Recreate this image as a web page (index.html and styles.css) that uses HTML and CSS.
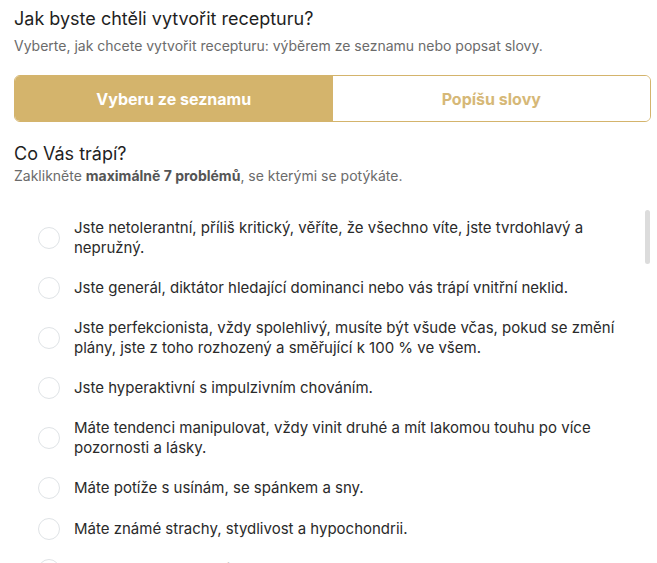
FILE: index.html
```html
<!DOCTYPE html>
<html lang="cs">
<head>
<meta charset="utf-8">
<title>Receptura</title>
<link rel="stylesheet" href="styles.css">
</head>
<body>
<main class="page">
  <section class="intro">
    <h1 class="title">Jak byste chtěli vytvořit recepturu?</h1>
    <p class="subtitle">Vyberte, jak chcete vytvořit recepturu: výběrem ze seznamu nebo popsat slovy.</p>
  </section>

  <div class="toggle">
    <button class="toggle-btn active" type="button">Vyberu ze seznamu</button>
    <button class="toggle-btn" type="button">Popíšu slovy</button>
  </div>

  <section class="problems">
    <h2 class="title">Co Vás trápí?</h2>
    <p class="subtitle">Zaklikněte <strong>maximálně 7 problémů</strong>, se kterými se potýkáte.</p>
  </section>

  <div class="list-wrap">
    <ul class="list">
      <li class="item"><span class="radio"></span><span class="label">Jste netolerantní, příliš kritický, věříte, že všechno víte, jste tvrdohlavý a nepružný.</span></li>
      <li class="item"><span class="radio"></span><span class="label">Jste generál, diktátor hledající dominanci nebo vás trápí vnitřní neklid.</span></li>
      <li class="item"><span class="radio"></span><span class="label">Jste perfekcionista, vždy spolehlivý, musíte být všude včas, pokud se změní plány, jste z toho rozhozený a směřující k 100 % ve všem.</span></li>
      <li class="item"><span class="radio"></span><span class="label">Jste hyperaktivní s impulzivním chováním.</span></li>
      <li class="item"><span class="radio"></span><span class="label">Máte tendenci manipulovat, vždy vinit druhé a mít lakomou touhu po více pozornosti a lásky.</span></li>
      <li class="item"><span class="radio"></span><span class="label">Máte potíže s usínám, se spánkem a sny.</span></li>
      <li class="item"><span class="radio"></span><span class="label">Máte známé strachy, stydlivost a hypochondrii.</span></li>
      <li class="item"><span class="radio"></span><span class="label">Máte sklony k depresím a smutku.</span></li>
    </ul>
    <div class="scroll-thumb"></div>
  </div>
</main>
</body>
</html>
```

FILE: styles.css
```css
* { box-sizing: border-box; }

html, body {
  margin: 0;
  padding: 0;
  height: 100%;
  overflow: hidden;
  background: #ffffff;
}

body {
  font-family: Inter, "Noto Sans", "Liberation Sans", sans-serif;
  color: #222222;
}

.page {
  padding: 7px 6px 0 14px;
}

.title {
  margin: 0;
  font-size: 18px;
  font-weight: 400;
  line-height: 24px;
  color: #1f1f1f;
}

.subtitle {
  margin: 0;
  font-size: 14px;
  line-height: 20px;
  color: #6b6b6b;
}

.intro .subtitle {
  margin-top: 5px;
}

.subtitle strong {
  font-weight: 700;
  color: #555555;
}

.toggle {
  display: flex;
  margin-top: 19px;
  height: 47px;
  border: 1px solid #d4b46c;
  border-radius: 6px;
  overflow: hidden;
}

.toggle-btn {
  flex: 1;
  border: 0;
  margin: 0;
  padding: 0;
  background: #ffffff;
  font-family: inherit;
  font-size: 16px;
  font-weight: 700;
  color: #d6b877;
  cursor: pointer;
}

.toggle-btn.active {
  background: #d4b46c;
  color: #ffffff;
}

.problems {
  margin-top: 20px;
}

.list-wrap {
  position: relative;
  margin-top: 32px;
}

.list {
  list-style: none;
  margin: 0;
  padding: 0 21px 0 24px;
  display: flex;
  flex-direction: column;
  gap: 19px;
}

.item {
  display: flex;
  align-items: center;
  gap: 14px;
}

.radio {
  flex: none;
  width: 22px;
  height: 22px;
  border: 1.5px solid #dfe3e6;
  border-radius: 50%;
  background: #ffffff;
}

.label {
  font-size: 15px;
  line-height: 20px;
  color: #2a2a2a;
}

.scroll-thumb {
  position: absolute;
  top: -8px;
  right: 1px;
  width: 5px;
  height: 54px;
  border-radius: 3px;
  background: #dcdcdc;
}
```
